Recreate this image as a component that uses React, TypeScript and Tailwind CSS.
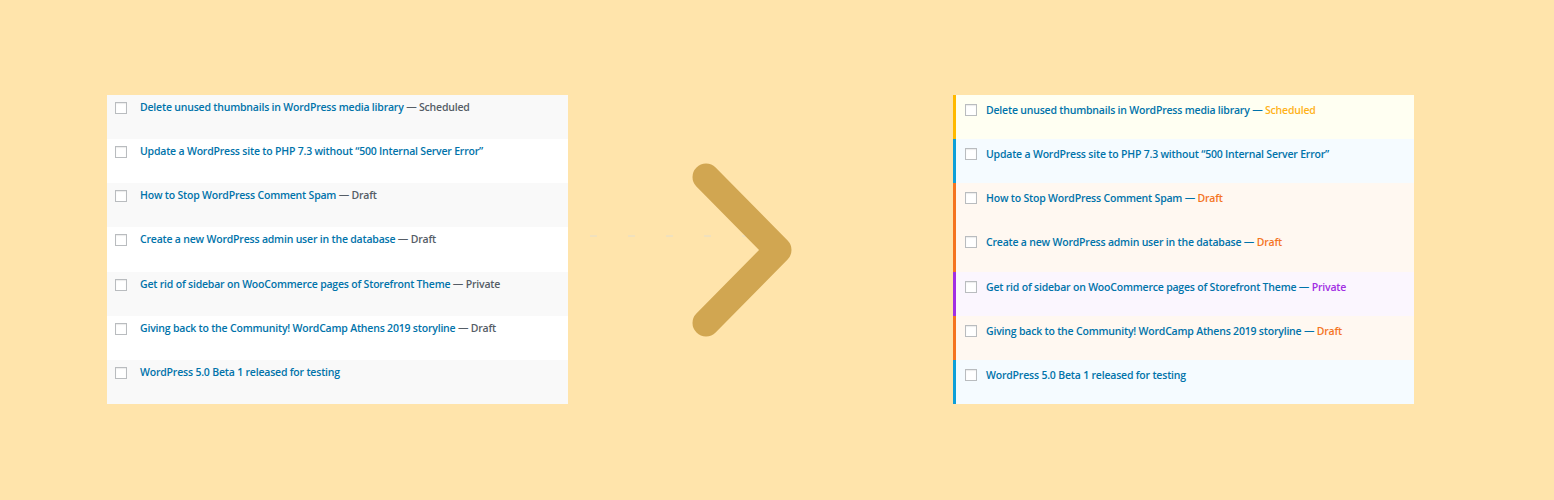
const posts = [
  { title: "Delete unused thumbnails in WordPress media library", status: "Scheduled" },
  { title: "Update a WordPress site to PHP 7.3 without \u201c500 Internal Server Error\u201d", status: "" },
  { title: "How to Stop WordPress Comment Spam", status: "Draft" },
  { title: "Create a new WordPress admin user in the database", status: "Draft" },
  { title: "Get rid of sidebar on WooCommerce pages of Storefront Theme", status: "Private" },
  { title: "Giving back to the Community! WordCamp Athens 2019 storyline", status: "Draft" },
  { title: "WordPress 5.0 Beta 1 released for testing", status: "" },
];

const statusStyles: Record<string, { row: string; text: string }> = {
  Scheduled: { row: "bg-[#fffff2] border-[#ffb900]", text: "text-[#ffb21a]" },
  Draft: { row: "bg-[#fff8f1] border-[#f4741f]", text: "text-[#f4741f]" },
  Private: { row: "bg-[#fbf6fe] border-[#a12ee3]", text: "text-[#a12ee3]" },
  "": { row: "bg-[#f5fbff] border-[#0e9fd8]", text: "" },
};

function Checkbox() {
  return <span className="w-[12px] h-[12px] shrink-0 border border-[#b9bcbf] bg-white shadow-[inset_0_1px_1px_rgba(0,0,0,0.08)]" />;
}

function Before() {
  return (
    <div className="w-[461px] h-[309px] flex flex-col">
      {posts.map((post, index) => (
        <div key={index} className={`flex-1 flex items-start gap-[13px] pl-[8px] pt-[7px] ${index % 2 === 0 ? "bg-[#f9f9f9]" : "bg-white"}`}>
          <Checkbox />
          <p className="text-[10.5px] tracking-[-0.2px] leading-[10px] font-semibold text-[#0073aa]">
            {post.title}
            {post.status && <span className="text-[#555d66]"> — {post.status}</span>}
          </p>
        </div>
      ))}
    </div>
  );
}

function After() {
  return (
    <div className="w-[461px] h-[309px] flex flex-col">
      {posts.map((post, index) => {
        const style = statusStyles[post.status];
        return (
          <div key={index} className={`flex-1 flex items-start gap-[9px] pl-[9px] pt-[9px] border-l-[3px] ${style.row}`}>
            <Checkbox />
            <p className="text-[10.5px] tracking-[-0.2px] leading-[12px] font-semibold text-[#0073aa]">
              {post.title}
              {post.status && <> — <span className={style.text}>{post.status}</span></>}
            </p>
          </div>
        );
      })}
    </div>
  );
}

function Arrow() {
  return (
    <div className="w-[385px] h-[309px]">
      <svg width="385" height="309" viewBox="0 0 385 309">
        <line x1="22" y1="141" x2="185" y2="141" stroke="#d5dde0" strokeOpacity="0.7" strokeWidth="1" strokeDasharray="7 31" />
        <polyline points="138,82 210,155 138,228" fill="none" stroke="#d1a651" strokeWidth="27" strokeLinecap="round" strokeLinejoin="round" />
      </svg>
    </div>
  );
}

function App() {
  return (
    <div className="w-full h-[500px] bg-[#ffe4ab] flex items-start pl-[107px] pt-[95px]" style={{ fontFamily: '"Open Sans", "Noto Sans", sans-serif' }}>
      <Before />
      <Arrow />
      <After />
    </div>
  );
}

export default App
